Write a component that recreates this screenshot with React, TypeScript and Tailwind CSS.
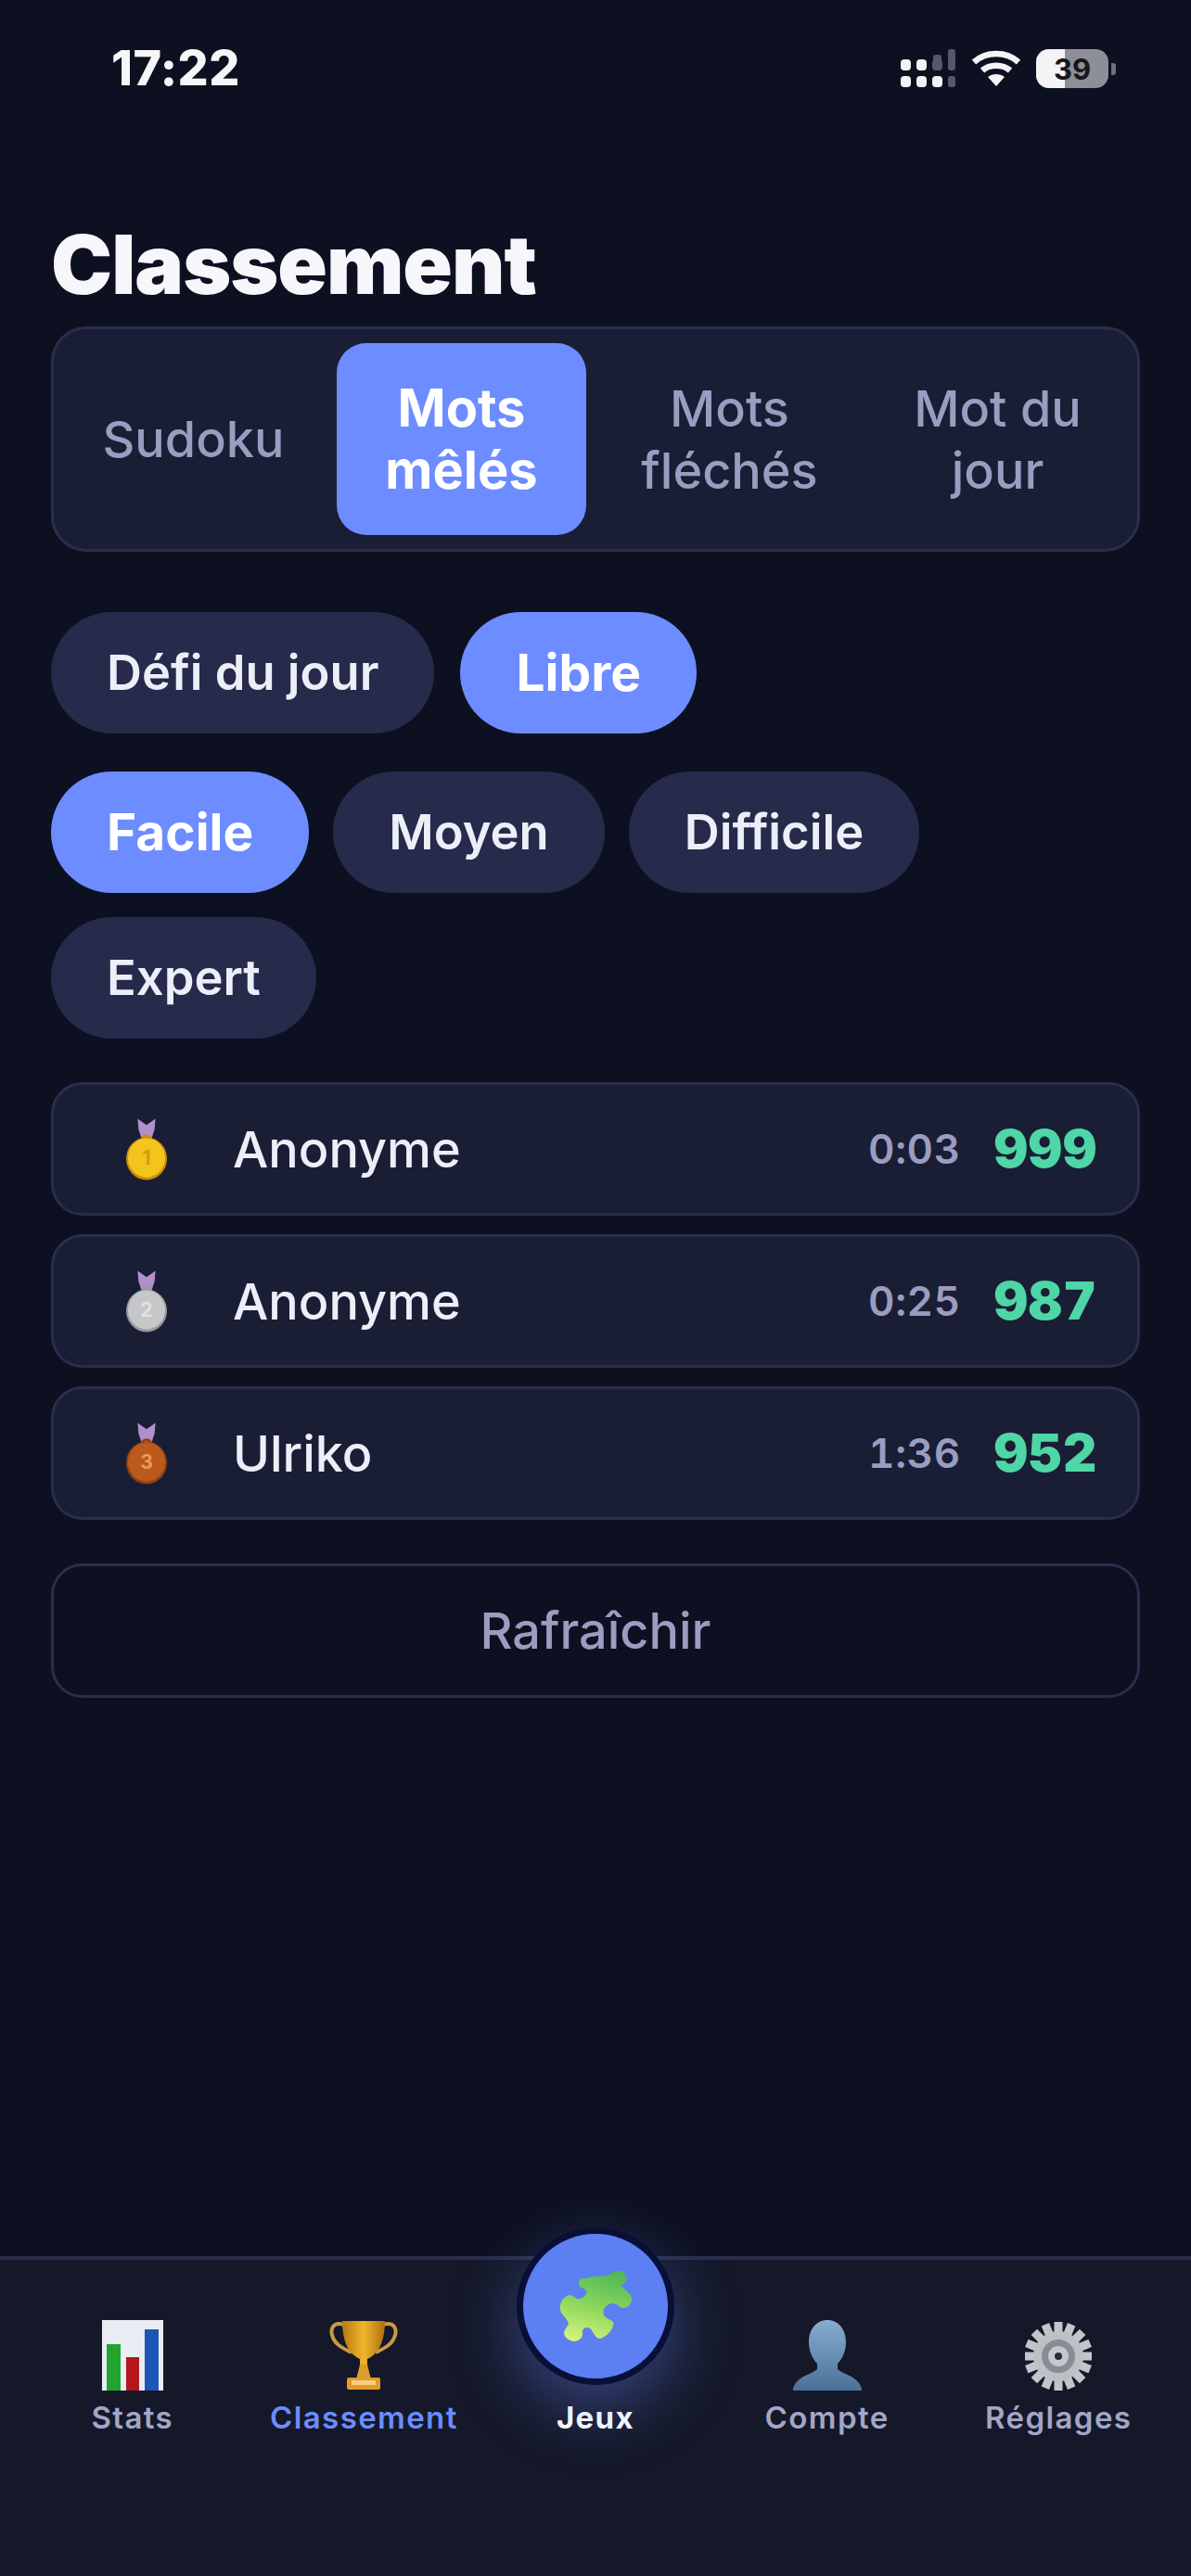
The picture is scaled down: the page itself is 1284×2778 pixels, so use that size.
import React from "react";

const font = "font-['Inter','Liberation_Sans',sans-serif]";

function SignalIcon() {
  const on = "#f2f2f5";
  const off = "#55586c";
  return (
    <svg width="60" height="42" viewBox="0 0 60 42">
      {[0, 17, 34].map((x, i) => (
        <g key={x}>
          <rect x={x} y="11" width="11" height="12" rx="4" fill={i < 2 ? on : off} />
          <rect x={x} y="29" width="11" height="12" rx="4" fill={on} />
        </g>
      ))}
      <rect x="35" y="6" width="9" height="17" rx="3" fill={off} />
      <rect x="51" y="0" width="8" height="23" rx="3" fill={off} />
      <rect x="51" y="29" width="8" height="12" rx="3" fill={off} />
    </svg>
  );
}

function WifiIcon() {
  return (
    <svg width="54" height="40" viewBox="0 0 54 40" fill="none" stroke="#f4f4f7" strokeLinecap="butt">
      <path d="M3 13C16 1 38 1 51 13" strokeWidth="6.5" />
      <path d="M12 22C20 15 34 15 42 22" strokeWidth="6.5" />
      <path d="M27 39L18 29C23 25 31 25 36 29Z" fill="#f4f4f7" stroke="none" />
    </svg>
  );
}

function Battery() {
  return (
    <div className="flex items-center">
      <div className="relative flex h-[42px] w-[78px] items-center justify-center overflow-hidden rounded-[14px] bg-[#8d8e98]">
        <div className="absolute inset-y-0 left-0 w-[31px] bg-[#f4f4f6]" />
        <span className="relative text-[31px] leading-none font-bold text-[#17171d]">39</span>
      </div>
      <div className="ml-[3px] h-[13px] w-[5px] rounded-r-[3px] bg-[#6f707a]" />
    </div>
  );
}

function Medal({ disc, rim, n, num }: { disc: string; rim: string; n: string; num: string }) {
  return (
    <svg width="46" height="68" viewBox="0 0 48 68">
      <path d="M14 0L24 7L34 0L33 12L29 24H19L15 12Z" fill="#b08fcb" />
      <circle cx="24" cy="24" r="5" fill="none" stroke={rim} strokeWidth="3" />
      <ellipse cx="24" cy="45" rx="23" ry="24" fill={rim} />
      <ellipse cx="24" cy="44" rx="21" ry="22" fill={disc} />
      <text x="24" y="52" textAnchor="middle" fontSize="22" fontWeight="700" fill={num}>
        {n}
      </text>
    </svg>
  );
}

function StatsIcon() {
  return (
    <svg width="66" height="76" viewBox="0 0 66 76">
      <rect width="66" height="76" fill="#e9edf4" />
      <rect x="5" y="26" width="15" height="50" fill="#22a52f" />
      <rect x="26" y="40" width="14" height="36" fill="#b4161b" />
      <rect x="46" y="10" width="15" height="66" fill="#1c57b3" />
    </svg>
  );
}

function TrophyIcon() {
  return (
    <svg width="76" height="78" viewBox="0 0 76 78">
      <defs>
        <linearGradient id="cup" x1="0" x2="1" y1="0" y2="0">
          <stop offset="0" stopColor="#b87a10" />
          <stop offset="0.5" stopColor="#f0b42c" />
          <stop offset="1" stopColor="#b07010" />
        </linearGradient>
      </defs>
      <path d="M17 7C5 3 1 12 5 21C8 29 17 33 25 37" fill="none" stroke="#c99a45" strokeWidth="4" />
      <path d="M59 7C71 3 75 12 71 21C68 29 59 33 51 37" fill="none" stroke="#c99a45" strokeWidth="4" />
      <path d="M15 3H61C61 24 55 38 42 44V55H34V44C21 38 15 24 15 3Z" fill="url(#cup)" />
      <path d="M34 50H42L46 66H30Z" fill="#d99f2a" />
      <rect x="20" y="64" width="36" height="13" rx="2" fill="#e39a2c" />
      <rect x="25" y="67" width="26" height="5" fill="#f6cf80" />
    </svg>
  );
}

function PersonIcon() {
  return (
    <svg width="74" height="76" viewBox="0 0 74 76">
      <defs>
        <linearGradient id="bust" x1="0" x2="0" y1="0" y2="1">
          <stop offset="0" stopColor="#86acd0" />
          <stop offset="1" stopColor="#4c7199" />
        </linearGradient>
      </defs>
      <path d="M37 0C49 0 57 10 57 24C57 36 51 44 48 47V53C54 59 70 60 74 74V76H0V74C4 60 20 59 26 53V47C23 44 17 36 17 24C17 10 25 0 37 0Z" fill="url(#bust)" />
    </svg>
  );
}

function GearIcon() {
  const teeth = Array.from({ length: 16 }, (_, i) => i * 22.5);
  return (
    <svg width="72" height="74" viewBox="0 0 72 74">
      <g transform="translate(36 37)">
        {teeth.map((a) => (
          <rect key={a} x="-4.5" y="-37" width="9" height="14" fill="#c4c5cb" transform={`rotate(${a})`} />
        ))}
        <circle r="27" fill="#bfc0c6" />
        <circle r="18" fill="#8a8c95" />
        <circle r="11" fill="#c6c7cc" />
        <circle r="4" fill="#2a2d3a" />
      </g>
    </svg>
  );
}

// Tilted jigsaw piece, dark green at the top fading to yellow-green below.
function PuzzleIcon() {
  return (
    <svg width="82" height="80" viewBox="-2 -1 82 80">
      <defs>
        <linearGradient id="piece" gradientUnits="userSpaceOnUse" x1="50" y1="0" x2="28" y2="77">
          <stop offset="0" stopColor="#4fb857" />
          <stop offset="0.55" stopColor="#8fd85c" />
          <stop offset="1" stopColor="#d0f27a" />
        </linearGradient>
      </defs>
      <path
        d="M29 9C36 6 48 7 55 5C57 0 70 -1 72 6C74 11 70 15 66 16L76 26C81 32 76 42 68 41C64 40 62 36 58 36C50 36 46 44 48 48C49 52 55 53 58 56C60 62 52 72 44 74C38 74 37 66 33 63C28 60 24 64 25 68C26 74 18 79 12 76C6 74 3 68 7 63C9 60 11 58 9 55L2 46C-2 38 4 28 11 27C15 27 17 32 22 31C27 30 31 25 29 22C27 19 22 20 21 15C20 10 25 8 29 9Z"
        fill="url(#piece)"
      />
    </svg>
  );
}

const tabs = [
  { label: "Sudoku", active: false },
  { label: "Mots mêlés", active: true },
  { label: "Mots fléchés", active: false },
  { label: "Mot du jour", active: false },
];

const scores = [
  { name: "Anonyme", time: "0:03", score: "999", medal: { disc: "#f2c41c", rim: "#c98d10", n: "1", num: "#d99a12" } },
  { name: "Anonyme", time: "0:25", score: "987", medal: { disc: "#c6c7c9", rim: "#98999d", n: "2", num: "#e2e2e4" } },
  { name: "Ulriko", time: "1:36", score: "952", medal: { disc: "#bb5a1c", rim: "#8f4114", n: "3", num: "#e89b5a" } },
];

function Pill({ label, active }: { label: string; active?: boolean }) {
  return (
    <div
      className={
        "flex h-[131px] items-center rounded-full px-[60px] " +
        (active ? "bg-[#6c8cff] text-[55px] font-bold text-white" : "bg-[#262a4b] text-[52.5px] font-semibold text-[#eceef8]")
      }
    >
      {label}
    </div>
  );
}

function NavItem({ icon, label, color }: { icon: React.ReactNode; label: string; color: string }) {
  return (
    <div className="flex flex-col items-center">
      <div className="flex h-[78px] items-end">{icon}</div>
      <span className={"mt-[9px] text-[33px] leading-[40px] font-semibold tracking-[1.4px] " + color}>{label}</span>
    </div>
  );
}

export default function App() {
  return (
    <div className={"flex h-[2778px] w-[1284px] flex-col overflow-hidden bg-[#0d1020] text-white " + font}>
      <div className="flex h-[148px] items-start justify-between pt-[51px] pr-[81px] pl-[120px]">
        <span className="text-[52px] leading-[46px] font-extrabold tracking-[0.5px] text-[#f6f6f8]">17:22</span>
        <div className="flex items-center gap-[16px] pt-[2px]">
          <SignalIcon />
          <WifiIcon />
          <Battery />
        </div>
      </div>

      <main className="flex flex-1 flex-col px-[55px]">
        <h1 className="mt-[87px] text-[88.5px] leading-[100px] font-black tracking-[-1px] text-[#f7f7fb]">Classement</h1>

        <div className="mt-[17px] grid grid-cols-4 gap-[20px] rounded-[38px] border-[3px] border-[#2a2e4d] bg-[#1a1e35] px-[16px] py-[15px]">
          {tabs.map((t) => (
            <div
              key={t.label}
              className={
                "flex h-[207px] items-center justify-center rounded-[32px] text-center leading-[67px] " +
                (t.active ? "bg-[#6c8cff] text-[56px] font-bold text-white" : "text-[54px] font-medium text-[#9a9dc0]")
              }
            >
              <span className={t.label === "Sudoku" ? "" : "w-[210px]"}>{t.label}</span>
            </div>
          ))}
        </div>

        <div className="mt-[65px] flex gap-[28px]">
          <Pill label="Défi du jour" />
          <Pill label="Libre" active />
        </div>

        <div className="mt-[41px] flex flex-wrap gap-x-[26px] gap-y-[26px]">
          <Pill label="Facile" active />
          <Pill label="Moyen" />
          <Pill label="Difficile" />
          <Pill label="Expert" />
        </div>

        <div className="mt-[47px] flex flex-col gap-[20px]">
          {scores.map((s, i) => (
            <div
              key={i}
              className="flex h-[144px] items-center rounded-[34px] border-[3px] border-[#2a2e4d] bg-[#1a1e35] pr-[43px] pl-[77px]"
            >
              <Medal {...s.medal} />
              <span className="ml-[70px] flex-1 text-[54px] font-medium text-[#eceef8]">{s.name}</span>
              <span className="text-[44px] font-semibold tracking-[0.6px] text-[#9a9dc0] tabular-nums">{s.time}</span>
              <span className="ml-[36px] text-[56px] leading-none font-black tracking-[1px] text-[#4fd6a6] tabular-nums">
                {s.score}
              </span>
            </div>
          ))}
        </div>

        <div className="mt-[47px] flex h-[145px] items-center justify-center rounded-[34px] border-[3px] border-[#2a2e4d] text-[54px] font-medium text-[#9a9dc0]">
          Rafraîchir
        </div>
      </main>

      <nav className="relative grid h-[345px] grid-cols-5 border-t-[4px] border-[#2a2d4a] bg-[#141829] px-[18px] pt-[63px]">
        <NavItem icon={<StatsIcon />} label="Stats" color="text-[#a3a6c6]" />
        <NavItem icon={<TrophyIcon />} label="Classement" color="text-[#6c8cff]" />
        <div className="flex flex-col items-center">
          <div className="absolute -top-[35px] flex h-[170px] w-[170px] items-center justify-center rounded-full border-[7px] border-[#0a0f38] bg-[#5c7ff2] shadow-[0_24px_70px_rgba(108,140,255,0.4)]">
            <PuzzleIcon />
          </div>
          <span className="mt-[87px] text-[33px] leading-[40px] font-bold tracking-[1.4px] text-white">Jeux</span>
        </div>
        <NavItem icon={<PersonIcon />} label="Compte" color="text-[#a3a6c6]" />
        <NavItem icon={<GearIcon />} label="Réglages" color="text-[#a3a6c6]" />
      </nav>
    </div>
  );
}
